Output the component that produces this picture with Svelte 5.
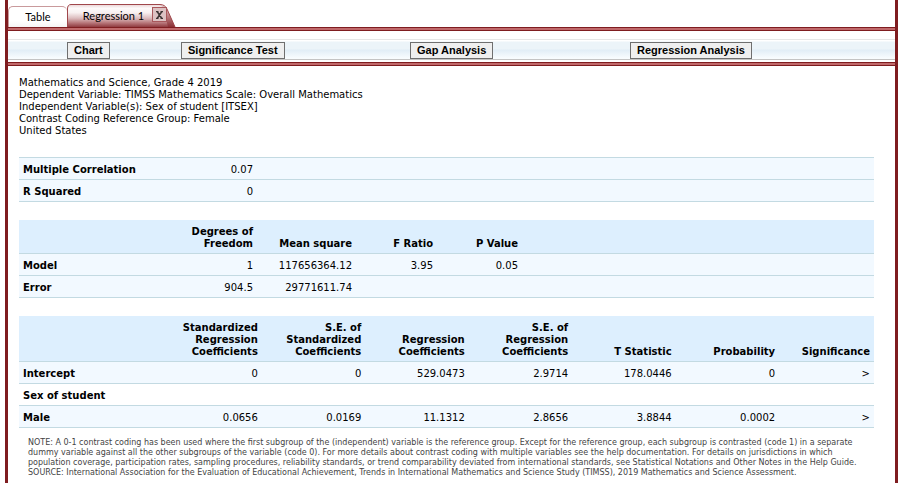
<script>
  const tools = ['Chart', 'Significance Test', 'Gap Analysis', 'Regression Analysis'];

  const summary = [
    'Mathematics and Science, Grade 4 2019',
    'Dependent Variable: TIMSS Mathematics Scale: Overall Mathematics',
    'Independent Variable(s): Sex of student [ITSEX]',
    'Contrast Coding Reference Group: Female',
    'United States'
  ];

  const fit = [
    ['Multiple Correlation', '0.07'],
    ['R Squared', '0']
  ];

  const variance = {
    heads: [['Degrees of', 'Freedom'], ['Mean square'], ['F Ratio'], ['P Value']],
    rows: [
      ['Model', '1', '117656364.12', '3.95', '0.05'],
      ['Error', '904.5', '29771611.74', '', '']
    ]
  };

  const coefficients = {
    heads: [
      ['Standardized', 'Regression', 'Coefficients'],
      ['S.E. of', 'Standardized', 'Coefficients'],
      ['Regression', 'Coefficients'],
      ['S.E. of', 'Regression', 'Coefficients'],
      ['T Statistic'],
      ['Probability'],
      ['Significance']
    ],
    rows: [
      ['Intercept', '0', '0', '529.0473', '2.9714', '178.0446', '0', '>'],
      ['Sex of student', '', '', '', '', '', '', ''],
      ['Male', '0.0656', '0.0169', '11.1312', '2.8656', '3.8844', '0.0002', '>']
    ]
  };

  const notes = [
    'NOTE: A 0-1 contrast coding has been used where the first subgroup of the (independent) variable is the reference group. Except for the reference group, each subgroup is contrasted (code 1) in a separate',
    'dummy variable against all the other subgroups of the variable (code 0). For more details about contrast coding with multiple variables see the help documentation. For details on jurisdictions in which',
    'population coverage, participation rates, sampling procedures, reliability standards, or trend comparability deviated from international standards, see Statistical Notations and Other Notes in the Help Guide.',
    'SOURCE: International Association for the Evaluation of Educational Achievement, Trends in International Mathematics and Science Study (TIMSS), 2019 Mathematics and Science Assessment.'
  ];
</script>

{#snippet lines(items)}
  {#each items as item, i}{#if i > 0}<br />{/if}{item}{/each}
{/snippet}

{#snippet grid(data, kind)}
  <table class={kind}>
    <colgroup>
      <col class="label" />
      {#each data.heads as _, i}<col class="c{i + 1}" />{/each}
      {#if kind === 'variance'}<col />{/if}
    </colgroup>
    <thead>
      <tr>
        <td></td>
        {#each data.heads as head}<th scope="col">{@render lines(head)}</th>{/each}
        {#if kind === 'variance'}<td></td>{/if}
      </tr>
    </thead>
    <tbody>
      {#each data.rows as [label, ...cells]}
        <tr class:group={kind === 'coefficients' && cells[0] === ''}>
          <th scope="row">{label}</th>
          {#each cells as cell}<td>{cell}</td>{/each}
          {#if kind === 'variance'}<td></td>{/if}
        </tr>
      {/each}
    </tbody>
  </table>
{/snippet}

<div class="frame">
  <nav class="tabs">
    <button class="tab" type="button">Table</button>
    <div class="tab active">
      <svg class="shape" viewBox="0 0 109 23" preserveAspectRatio="none" aria-hidden="true">
        <defs>
          <linearGradient id="tabfill" x1="0" y1="0" x2="0" y2="1">
            <stop offset="0" stop-color="#ecd9da" />
            <stop offset="0.15" stop-color="#fdfafa" />
            <stop offset="0.35" stop-color="#f8f0f0" />
            <stop offset="0.6" stop-color="#dcbcbe" />
            <stop offset="0.82" stop-color="#b67478" />
            <stop offset="1" stop-color="#8f3a3f" />
          </linearGradient>
          <linearGradient id="tabend" x1="0" y1="0" x2="0" y2="1">
            <stop offset="0" stop-color="#e2c6c7" />
            <stop offset="0.5" stop-color="#bd8184" />
            <stop offset="1" stop-color="#8a2f34" />
          </linearGradient>
        </defs>
        <path d="M0 23V5Q0 1 4 1H93Q98 1 100 5L108 23Z" fill="url(#tabfill)" />
        <path d="M92 1Q98 1 100 5L108 23H101L97 6Q96 2 92 1Z" fill="url(#tabend)" />
        <path d="M.5 23V5Q.5.5 4 .5H93Q98 .5 100 5L108 23" fill="none" stroke="#a0474b" />
      </svg>
      <button class="name" type="button">Regression 1</button>
      <button class="close" type="button" aria-label="Close Regression 1">
        <svg width="7" height="8" viewBox="0 0 7 8"><path d="M0 .5H2.5M4.5 .5H7M0 7.500H2.500M4.500 7.500H7M1.200 .5L5.800 7.500M5.800 .5L1.200 7.500" stroke="#3c3434" stroke-width="1.500" fill="none" /></svg>
      </button>
    </div>
  </nav>
  <div class="rail"></div>
  <div class="toolbar">
    {#each tools as tool}<button type="button">{tool}</button>{/each}
  </div>
  <div class="rail"></div>

  <main>
    <p class="summary">{@render lines(summary)}</p>

    <table class="fit">
      <colgroup><col class="label" /><col class="c1" /><col /></colgroup>
      <tbody>
        {#each fit as [label, value]}
          <tr><th scope="row">{label}</th><td>{value}</td><td></td></tr>
        {/each}
      </tbody>
    </table>

    {@render grid(variance, 'variance')}
    {@render grid(coefficients, 'coefficients')}

    <p class="notes">{@render lines(notes)}</p>
  </main>
</div>

<style>
  :global(body) {
    margin: 0;
    background: #fff;
  }
  .frame {
    box-sizing: border-box;
    min-height: 100vh;
    margin: 0 3px 0 5px;
    border: solid #7f1d20;
    border-width: 0 3px;
    font-family: Verdana, 'DejaVu Sans', sans-serif;
    font-size: 10px;
    line-height: 12px;
    color: #000;
  }
  button {
    margin: 0;
    padding: 0;
    border: 0;
    background: none;
    color: #000;
  }
  .tabs {
    display: flex;
    align-items: flex-end;
    height: 27px;
  }
  .tab {
    box-sizing: border-box;
    width: 59px;
    height: 21px;
    font: 11px/18px Lato, sans-serif;
  }
  .tabs > button.tab {
    border: 1px solid #c99a9c;
    border-width: 1px 0 0 1px;
    border-radius: 5px 5px 0 0;
    background: linear-gradient(#fff 70%, #f5f5f5);
  }
  .active {
    position: relative;
    display: flex;
    align-items: flex-start;
    width: 109px;
    height: 23px;
  }
  .shape {
    position: absolute;
    inset: 0;
    width: 100%;
    height: 100%;
  }
  .name {
    position: relative;
    width: 85px;
    padding: 3px 0 0 8px;
    font: inherit;
  }
  .close {
    position: relative;
    display: flex;
    align-items: center;
    justify-content: center;
    width: 15px;
    height: 15px;
    margin-top: 3px;
    border: 1px solid #a8585c;
    background: #dcc2c3;
  }
  .rail {
    height: 2px;
    border: solid #7f1d20;
    border-width: 1px 0;
    background: #c0696b;
  }
  .toolbar {
    display: grid;
    grid-template-columns: 114fr 229fr 220fr 265fr;
    justify-items: start;
    align-items: center;
    height: 18px;
    margin: 8px 0 2px;
    padding: 1px 0 0 59px;
    border-top: 1px solid #e6e6e6;
    border-bottom: 1px solid #c4c4c4;
    background: linear-gradient(#fff 1px, #ecf4f9 2px, #ecf4f9 9px, #e1edf6 10px, #f8fcfe 18px);
  }
  .toolbar button {
    height: 17px;
    padding: 0 6px;
    border: 1px solid #6f6f6f;
    background: #efefef;
    font: bold 11px/15px Arial, 'Liberation Sans', sans-serif;
    white-space: nowrap;
  }
  main {
    padding: 11px 21px 0 11px;
  }
  p {
    margin: 0;
  }
  table {
    width: 100%;
    table-layout: fixed;
    border-collapse: separate;
    border-spacing: 0;
    margin-bottom: 18px;
  }
  th,
  td {
    padding: 6px 4px 3px;
    border-bottom: 1px solid #c3dae2;
    background: #f2f9ff;
    text-align: right;
    vertical-align: bottom;
    font-size: 10px;
    line-height: 12px;
  }
  tbody th {
    text-align: left;
    white-space: nowrap;
  }
  thead th,
  thead td {
    background: #ddeffe;
  }
  .group th,
  .group td {
    background: #fff;
  }
  .fit {
    margin-top: 20px;
  }
  .fit tr:first-child > * {
    border-top: 1px solid #c3dae2;
  }
  .label {
    width: 139px;
  }
  .fit .c1,
  .variance .c1,
  .variance .c2 {
    width: 99px;
  }
  .variance .c3 {
    width: 81px;
  }
  .variance .c4 {
    width: 85px;
  }
  .coefficients {
    margin-bottom: 10px;
  }
  .coefficients .label {
    width: auto;
  }
  .coefficients .c1,
  .coefficients .c2,
  .coefficients .c3,
  .coefficients .c4,
  .coefficients .c5,
  .coefficients .c6 {
    width: 12.1%;
  }
  .coefficients .c7 {
    width: 11.1%;
  }
  .notes {
    padding-left: 9px;
    font-size: 8px;
    line-height: 10px;
    color: #444;
    white-space: nowrap;
  }
</style>
